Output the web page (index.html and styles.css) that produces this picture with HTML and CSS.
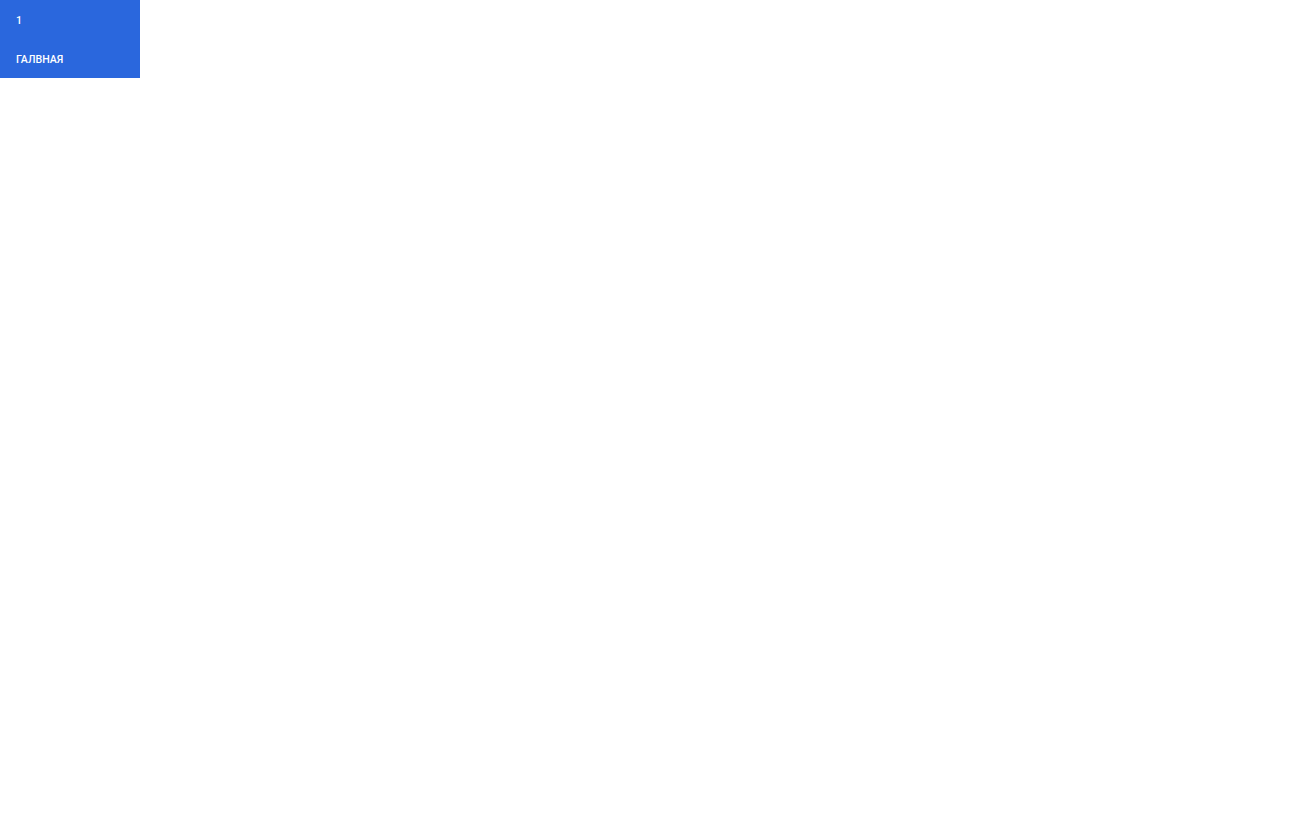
FILE: index.html
```html
<!DOCTYPE html>
<html lang="ru">
<head>
<meta charset="utf-8">
<title>Меню</title>
<link rel="stylesheet" href="styles.css">
</head>
<body>
<nav class="menu">
  <a class="menu-item" href="#">1</a>
  <a class="menu-item" href="#">ГАЛВНАЯ</a>
</nav>
</body>
</html>
```
FILE: styles.css
```css
html, body {
  margin: 0;
  padding: 0;
  background: #ffffff;
}
body {
  font-family: Roboto, "Liberation Sans", sans-serif;
}
.menu {
  width: 140.4px;
  background: #2a67dd;
  display: flex;
  flex-direction: column;
}
.menu-item {
  box-sizing: border-box;
  display: flex;
  align-items: center;
  height: 39.2px;
  padding-left: 16px;
  padding-top: 2px;
  color: #ffffff;
  text-decoration: none;
  font-size: 10.6px;
  font-weight: 500;
}
```
